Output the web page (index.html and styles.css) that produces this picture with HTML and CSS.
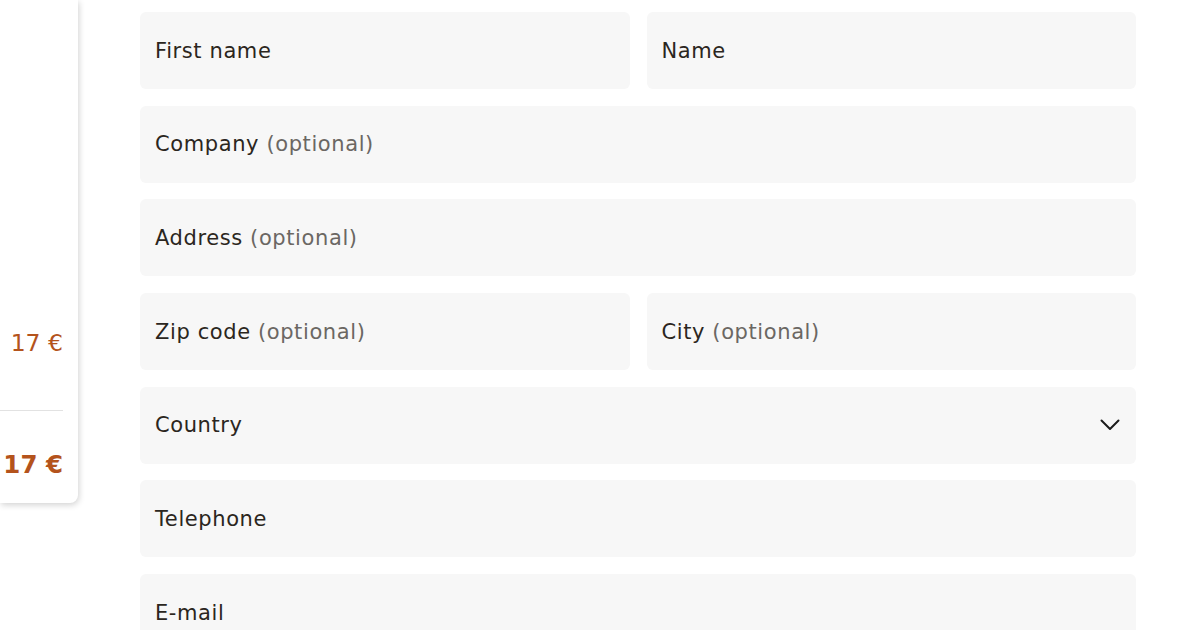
FILE: index.html
```html
<!DOCTYPE html>
<html lang="en">
<head>
    <meta charset="UTF-8">
    <meta name="viewport" content="width=device-width, initial-scale=1.0">
    <title>Checkout</title>
    <link rel="stylesheet" href="styles.css">
</head>
<body>
    <div class="page">
        <aside class="summary">
            <div class="summary-line">
                <span class="price">17 €</span>
            </div>
            <div class="summary-total">
                <span class="price total">17 €</span>
            </div>
        </aside>

        <form class="address-form">
            <div class="form-row">
                <div class="field"><span class="label">First name</span></div>
                <div class="field"><span class="label">Name</span></div>
            </div>
            <div class="field"><span class="label">Company <span class="optional">(optional)</span></span></div>
            <div class="field"><span class="label">Address <span class="optional">(optional)</span></span></div>
            <div class="form-row">
                <div class="field"><span class="label">Zip code <span class="optional">(optional)</span></span></div>
                <div class="field"><span class="label">City <span class="optional">(optional)</span></span></div>
            </div>
            <div class="field select">
                <span class="label">Country</span>
                <svg class="chevron" width="20" height="12" viewBox="0 0 20 12" fill="none">
                    <path d="M1.5 1.5 L10 10 L18.5 1.5" stroke="#1c1c1c" stroke-width="2" stroke-linecap="round" stroke-linejoin="round"/>
                </svg>
            </div>
            <div class="field"><span class="label">Telephone</span></div>
            <div class="field"><span class="label">E-mail</span></div>
        </form>
    </div>
</body>
</html>
```

FILE: styles.css
```css
/* Reset */
* {
    margin: 0;
    padding: 0;
    box-sizing: border-box;
}

body {
    font-family: 'DejaVu Sans', 'Open Sans', sans-serif;
    background-color: #fff;
    color: #2b2620;
    overflow: hidden;
}

.page {
    display: flex;
    align-items: flex-start;
    gap: 62px;
    height: 630px;
}

.summary {
    width: 78px;
    height: 503px;
    background-color: #fff;
    border-bottom-right-radius: 8px;
    box-shadow: 1px 2px 6px rgba(0, 0, 0, 0.18);
    display: flex;
    flex-direction: column;
    justify-content: flex-end;
    padding: 0 15px 0 0;
    flex-shrink: 0;
}

.price {
    color: #b4531c;
    font-size: 23.5px;
    line-height: 1;
    display: block;
    text-align: right;
    white-space: nowrap;
}

.price.total {
    font-weight: bold;
    font-size: 24.5px;
}

.summary-line {
    padding-bottom: 54px;
    border-bottom: 1px solid #e2e2e2;
}

.summary-total {
    padding: 42px 0 26px;
}

.address-form {
    width: 996px;
    padding-top: 12px;
    display: flex;
    flex-direction: column;
    gap: 16.7px;
}

.form-row {
    display: flex;
    gap: 17px;
}

.form-row .field {
    flex: 1;
}

.field {
    height: 77px;
    background-color: #f7f7f7;
    border-radius: 6px;
    display: flex;
    align-items: center;
    justify-content: space-between;
    padding: 0 16px 0 15px;
    font-size: 21px;
    letter-spacing: 0.6px;
}

.optional {
    color: #6b6763;
}

.chevron {
    display: block;
}
```
